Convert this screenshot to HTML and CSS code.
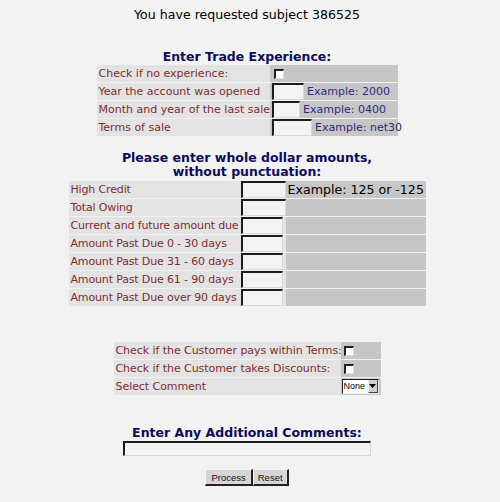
FILE: index.html
```html
<!DOCTYPE html>
<html>
<head>
<meta charset="utf-8">
<link rel="stylesheet" href="styles.css">
</head>
<body>
<div class="page">
  <p class="title">You have requested subject 386525</p>

  <h2 class="head head1">Enter Trade Experience:</h2>
  <table class="t1">
    <tr>
      <td class="lbl">Check if no experience:</td>
      <td class="val"><span class="chk"></span></td>
    </tr>
    <tr>
      <td class="lbl">Year the account was opened</td>
      <td class="val"><span class="inp w32"></span> <span class="ex">Example: 2000</span></td>
    </tr>
    <tr>
      <td class="lbl">Month and year of the last sale</td>
      <td class="val"><span class="inp w28"></span> <span class="ex">Example: 0400</span></td>
    </tr>
    <tr>
      <td class="lbl">Terms of sale</td>
      <td class="val"><span class="inp w40"></span> <span class="ex">Example: net30</span></td>
    </tr>
  </table>

  <h2 class="head head2">Please enter whole dollar amounts,<br>without punctuation:</h2>
  <table class="t2">
    <tr>
      <td class="lbl">High Credit</td>
      <td class="ic"><span class="inp w45"></span></td>
      <td class="val big">Example: 125 or -125</td>
    </tr>
    <tr>
      <td class="lbl">Total Owing</td>
      <td class="ic"><span class="inp w45"></span></td>
      <td class="val"></td>
    </tr>
    <tr>
      <td class="lbl">Current and future amount due</td>
      <td class="ic"><span class="inp w42"></span></td>
      <td class="val"></td>
    </tr>
    <tr>
      <td class="lbl">Amount Past Due 0 - 30 days</td>
      <td class="ic"><span class="inp w42"></span></td>
      <td class="val"></td>
    </tr>
    <tr>
      <td class="lbl">Amount Past Due 31 - 60 days</td>
      <td class="ic"><span class="inp w42"></span></td>
      <td class="val"></td>
    </tr>
    <tr>
      <td class="lbl">Amount Past Due 61 - 90 days</td>
      <td class="ic"><span class="inp w42"></span></td>
      <td class="val"></td>
    </tr>
    <tr>
      <td class="lbl">Amount Past Due over 90 days</td>
      <td class="ic"><span class="inp w42"></span></td>
      <td class="val"></td>
    </tr>
  </table>

  <table class="t3">
    <tr>
      <td class="lbl">Check if the Customer pays within Terms:</td>
      <td class="val"><span class="chk"></span></td>
    </tr>
    <tr>
      <td class="lbl">Check if the Customer takes Discounts:</td>
      <td class="val"><span class="chk"></span></td>
    </tr>
    <tr>
      <td class="lbl">Select Comment</td>
      <td class="val"><span class="sel"><span class="seltxt">None</span><span class="selbtn"><svg width="7" height="4" viewBox="0 0 7 4"><path d="M0 0H7L3.5 4Z" fill="#000"/></svg></span></span></td>
    </tr>
  </table>

  <h2 class="head head3">Enter Any Additional Comments:</h2>
  <div class="cmt"><span class="inp wide"></span></div>

  <div class="btns"><span class="btn">Process</span><span class="btn">Reset</span></div>
</div>
</body>
</html>
```
FILE: styles.css
```css
html, body {
  margin: 0;
  padding: 0;
  background: #f2f2f2;
}
body {
  font-family: "DejaVu Sans", Verdana, sans-serif;
  font-size: 11px;
  color: #000;
}
.page {
  width: 494px;
}
.title {
  margin: 0;
  padding-top: 7px;
  text-align: center;
  font-size: 12.6px;
  line-height: 16px;
}
.head {
  margin: 0;
  text-align: center;
  font-size: 12.5px;
  font-weight: bold;
  color: #0c0c5a;
  line-height: 14px;
}
.head1 { margin-top: 27px; }
.head2 { margin-top: 14px; }
.head3 { margin-top: 30px; }

table {
  border-collapse: separate;
  border-spacing: 0 1px;
  margin: 0 auto;
  table-layout: fixed;
}
td {
  box-sizing: border-box;
  padding: 0;
  height: 17px;
  vertical-align: middle;
  white-space: nowrap;
  overflow: visible;
}
.lbl {
  background: #e3e3e3;
  color: #7e2d2d;
  padding-left: 2px;
}
.val {
  background: #c6c6c6;
  padding-left: 2px;
}
.ex {
  color: #2a2a80;
}
.t1 { width: 301px; margin-top: 0; }
.t1 .lbl { width: 173px; }
.t1 .val { width: 128px; }

.t2 { width: 357px; margin-top: 1px; }
.t2 .lbl { width: 172px; letter-spacing: -0.15px; }
.t2 .ic { width: 45px; background: #e3e3e3; }
.t2 .val { width: 140px; }
.t2 .big { font-size: 12.6px; color: #000; padding-left: 2px; }

.t3 { width: 267px; margin-top: 34px; }
.t3 .lbl { width: 227px; letter-spacing: -0.06px; }
.t3 .val { width: 40px; padding-left: 1px; }

.inp {
  display: inline-block;
  vertical-align: middle;
  height: 14px;
  background: #f3f3f3;
  border-top: 2px solid #1c1c1c;
  border-left: 2px solid #1c1c1c;
  border-right: 1px solid #d8d8d8;
  border-bottom: 1px solid #d8d8d8;
  box-sizing: content-box;
}
.w28 { width: 25px; }
.w32 { width: 29px; }
.w40 { width: 37px; }
.w42 { width: 39px; }
.w45 { width: 42px; }

.chk {
  display: inline-block;
  vertical-align: middle;
  width: 7px;
  height: 7px;
  background: #fff;
  border-top: 2px solid #222;
  border-left: 2px solid #222;
  border-right: 1px solid #ddd;
  border-bottom: 1px solid #ddd;
  margin-left: 2px;
}

.sel {
  display: inline-flex;
  align-items: stretch;
  vertical-align: middle;
  height: 13px;
  border-top: 1px solid #222;
  border-left: 1px solid #222;
  border-right: 1px solid #eee;
  border-bottom: 1px solid #eee;
  background: #fff;
  font-family: "Liberation Sans", Arial, sans-serif;
  font-size: 9px;
}
.seltxt {
  padding: 0 1px;
  line-height: 13px;
  width: 23px;
}
.selbtn {
  width: 10px;
  background: #d4d0c8;
  border-left: 1px solid #eee;
  border-right: 1px solid #444;
  border-bottom: 1px solid #444;
  display: flex;
  align-items: center;
  justify-content: center;
  box-sizing: border-box;
}

.cmt {
  text-align: center;
  margin-top: 1px;
  height: 16px;
}
.wide {
  width: 245px;
  height: 12px;
}

.btns {
  margin-top: 12px;
  display: flex;
  justify-content: center;
}
.btn {
  display: inline-block;
  height: 17px;
  line-height: 16px;
  box-sizing: border-box;
  padding: 0 5px;
  background: #d6d6d6;
  border-top: 1px solid #f4f4f4;
  border-left: 1px solid #f4f4f4;
  border-right: 2px solid #222;
  border-bottom: 2px solid #222;
  font-family: "Liberation Sans", Arial, sans-serif;
  font-size: 9.5px;
  color: #111;
}
.btn + .btn { padding: 0 4px; }
```
